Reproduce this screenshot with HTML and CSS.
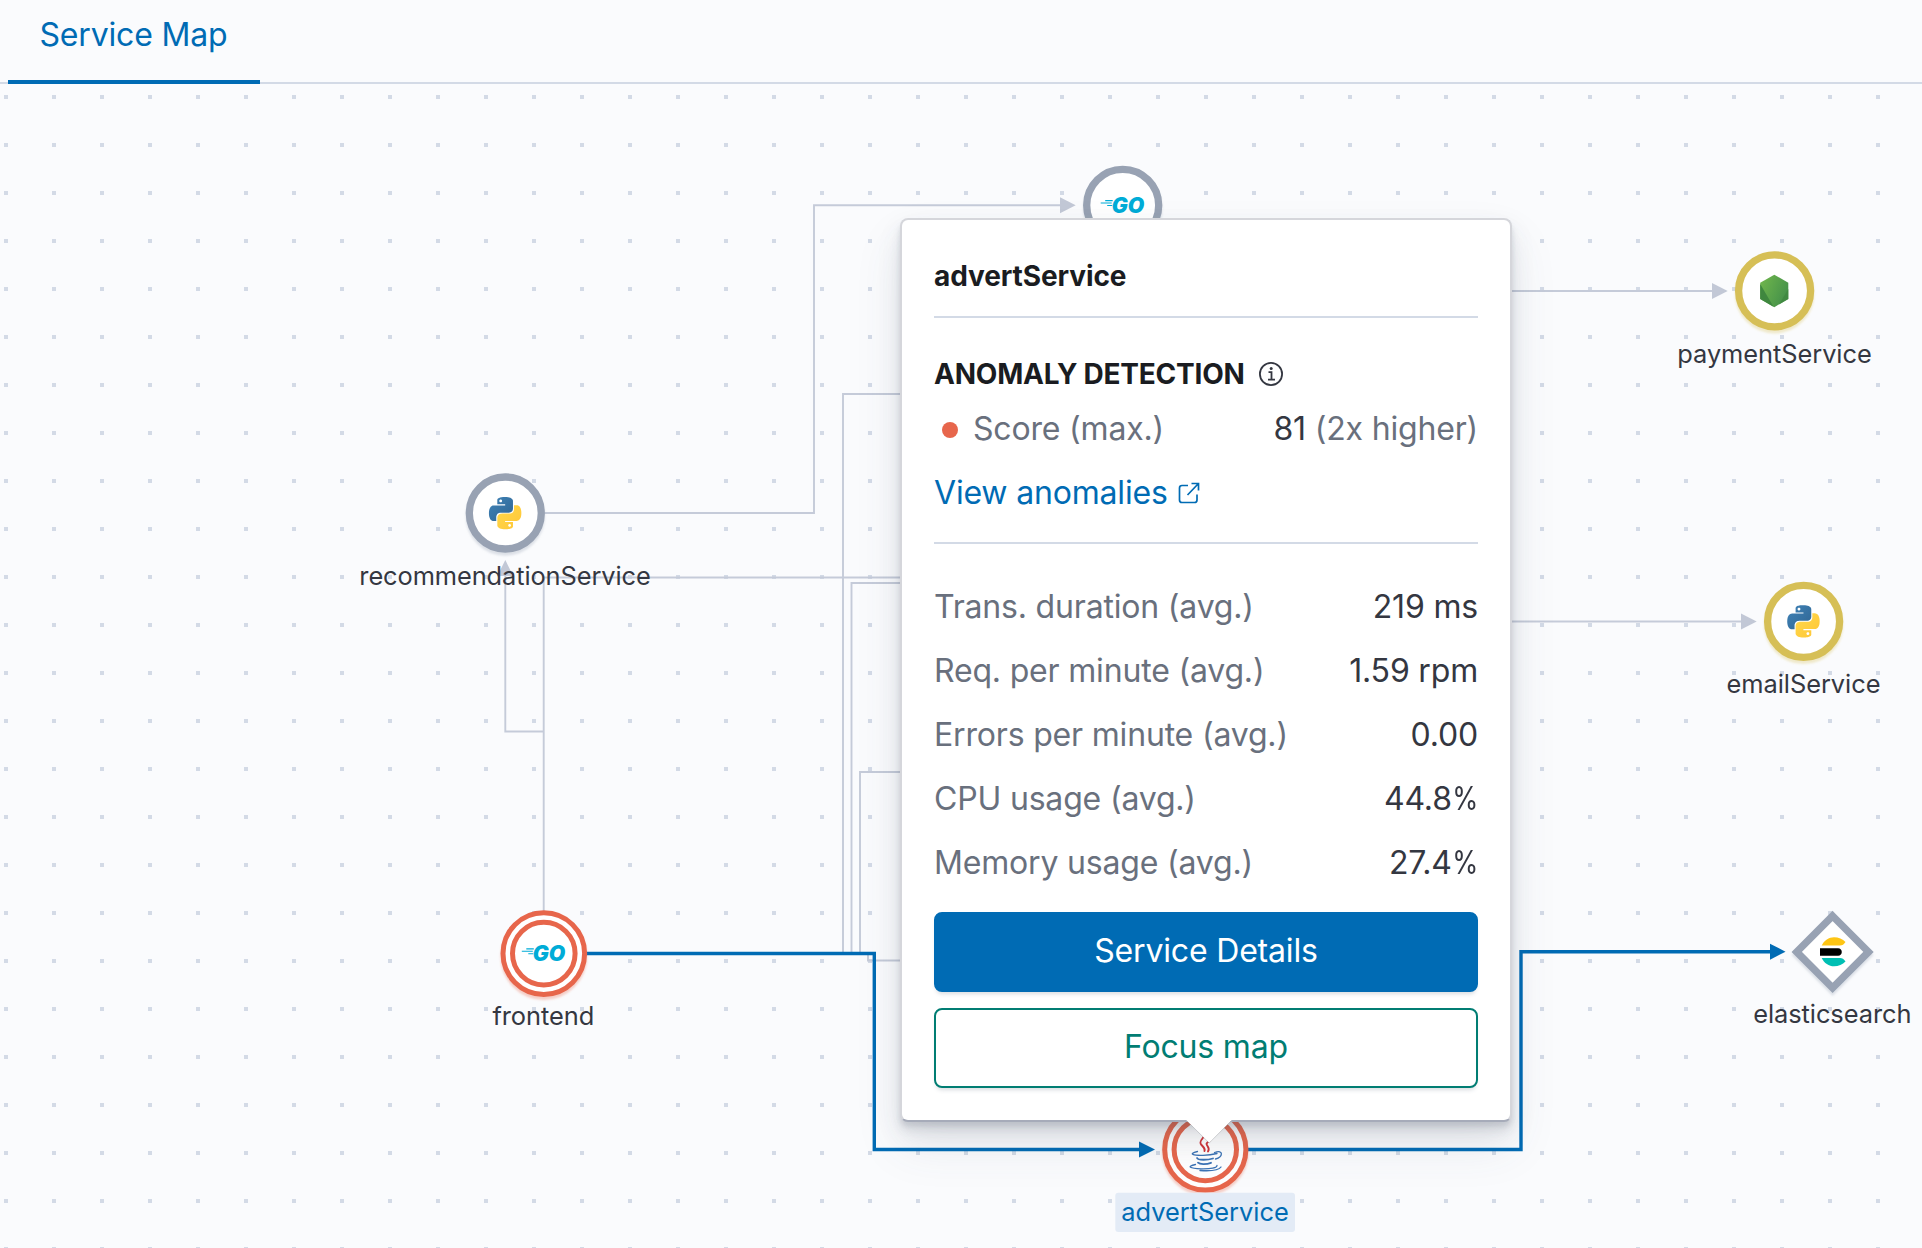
FILE: index.html
```html
<!DOCTYPE html>
<html lang="en">
<head>
<meta charset="utf-8">
<title>Service Map</title>
<link rel="stylesheet" href="styles.css">
</head>
<body>
<nav class="tabs">
  <a class="tab tab-selected">Service Map</a>
</nav>
<main class="map">
  <svg class="graph" width="1922" height="1164" viewBox="0 84 1922 1164">
    <defs>
      <linearGradient id="py-blue" x1="0" y1="0" x2="1" y2="1"><stop offset="0" stop-color="#3f83b8"/><stop offset="1" stop-color="#306592"/></linearGradient>
      <linearGradient id="py-yellow" x1="0" y1="0" x2="1" y2="1"><stop offset="0" stop-color="#ffd94c"/><stop offset="1" stop-color="#ffc636"/></linearGradient>
      <linearGradient id="node-mid" x1="0" y1="0" x2="1" y2="0.5"><stop offset="0" stop-color="#72b84c"/><stop offset="1" stop-color="#46924a"/></linearGradient>
      <filter id="node-shadow" x="-20%" y="-20%" width="140%" height="150%"><feDropShadow dx="0" dy="3" stdDeviation="1.2" flood-color="#98a2b3" flood-opacity=".3"/></filter>
      <filter id="red-shadow" x="-20%" y="-20%" width="140%" height="150%"><feDropShadow dx="0" dy="3" stdDeviation="1.2" flood-color="#e7664c" flood-opacity=".3"/></filter>
      <filter id="gold-shadow" x="-20%" y="-20%" width="140%" height="150%"><feDropShadow dx="0" dy="3" stdDeviation="1.2" flood-color="#d6bf57" flood-opacity=".3"/></filter>
      <g id="python">
        <path fill="url(#py-blue)" d="M14.25.18l.9.2.73.26.59.3.45.32.34.34.25.34.16.33.1.3.04.26.02.2-.01.13V8.5l-.05.63-.13.55-.21.46-.26.38-.3.31-.33.25-.35.19-.35.14-.33.1-.3.07-.26.04-.21.02H8.77l-.69.05-.59.14-.5.22-.41.27-.33.32-.27.35-.2.36-.15.37-.1.35-.07.32-.04.27-.02.21v3.06H3.17l-.21-.03-.28-.07-.32-.12-.35-.18-.36-.26-.36-.36-.35-.46-.32-.59-.28-.73-.21-.88-.14-1.05-.05-1.23.06-1.22.16-1.04.24-.87.32-.71.36-.57.4-.44.42-.33.42-.24.4-.16.36-.1.32-.05.24-.01h.16l.06.01h8.16v-.83H6.18l-.01-2.75-.02-.37.05-.34.11-.31.17-.28.25-.26.31-.23.38-.2.44-.18.51-.15.58-.12.64-.1.71-.06.77-.04.84-.02 1.27.05zm-6.3 1.98l-.23.33-.08.41.08.41.23.34.33.22.41.09.41-.09.33-.22.23-.34.08-.41-.08-.41-.23-.33-.33-.22-.41-.09-.41.09z"/>
        <path fill="url(#py-yellow)" d="M21.04 6.11l.28.06.32.12.35.18.36.27.36.35.35.47.32.59.28.73.21.88.14 1.04.05 1.23-.06 1.23-.16 1.04-.24.86-.32.71-.36.57-.4.45-.42.33-.42.24-.4.16-.36.09-.32.05-.24.02-.16-.01h-8.22v.82h5.84l.01 2.76.02.36-.05.34-.11.31-.17.29-.25.25-.31.24-.38.2-.44.17-.51.15-.58.13-.64.09-.71.07-.77.04-.84.01-1.27-.04-1.07-.14-.9-.2-.73-.25-.59-.3-.45-.33-.34-.34-.25-.34-.16-.33-.1-.3-.04-.25-.02-.2.01-.13v-5.34l.05-.64.13-.54.21-.46.26-.38.3-.32.33-.24.35-.2.35-.14.33-.1.3-.06.26-.04.21-.02.13-.01h5.84l.69-.05.59-.14.5-.21.41-.28.33-.32.27-.35.2-.36.15-.36.1-.35.07-.32.04-.28.02-.21V6.07h2.09l.14.01zm-6.47 14.25l-.23.33-.08.41.08.41.23.33.33.23.41.08.41-.08.33-.23.23-.33.08-.41-.08-.41-.23-.33-.33-.23-.41-.08-.41.08z"/>
      </g>
      <g id="golang">
        <path d="M-17.5-4.7h7.500M-22-2.300h11M-15.500.200h5" stroke="#00acd7" stroke-width="1.100" fill="none"/>
        <text class="go-mark" x="-11" y="7.200" textLength="32.500" lengthAdjust="spacingAndGlyphs">GO</text>
      </g>
    </defs>

    <g class="edges">
      <path d="M545 513H814V205.300H1062"/>
      <path d="M543.700 912V577.500H900"/>
      <path d="M543.700 731.500H505.300V574"/>
      <path d="M843 953V394H920"/>
      <path d="M851.500 953V583H920"/>
      <path d="M860 953V772H920"/>
      <path d="M868 953V960.500H920"/>
      <path d="M1500 291H1714"/>
      <path d="M1500 621.500H1743"/>
    </g>
    <g class="arrows">
      <path d="M1060 197.300V213.300L1075.700 205.300Z"/>
      <path d="M497.300 576H513.300L505.300 560Z"/>
      <path d="M1712 283V299L1727.700 291Z"/>
      <path d="M1741 613.500V629.500L1756.700 621.500Z"/>
    </g>
    <g class="edges edges-active">
      <path d="M586 953.500H874.300V1149.500H1141"/>
      <path d="M1247 1149.500H1521V951.700H1772"/>
    </g>
    <g class="arrows arrows-active">
      <path d="M1139 1141.500V1157.500L1155 1149.500Z"/>
      <path d="M1770 943.700V959.700L1785.500 951.700Z"/>
    </g>

    <g filter="url(#node-shadow)">
      <circle class="ring" cx="1122.700" cy="205.300" r="36"/>
    </g>
    <use href="#golang" x="1122.700" y="205.300"/>

    <circle class="ring" filter="url(#node-shadow)" cx="505.300" cy="513" r="36"/>
    <use href="#python" transform="translate(489 497) scale(1.345)"/>
    <text class="label label-long" x="505" y="584.500">recommendationService</text>

    <g filter="url(#red-shadow)">
      <circle class="ring-red" cx="543.800" cy="953.600" r="40.800"/>
      <circle class="ring-red" cx="543.800" cy="953.600" r="31.300"/>
    </g>
    <use href="#golang" x="543.800" y="953.600"/>
    <text class="label" x="543.300" y="1025">frontend</text>

    <circle class="ring ring-gold" filter="url(#gold-shadow)" cx="1774.600" cy="290.800" r="36"/>
    <path fill="url(#node-mid)" d="M1774.300 274.700L1788.300 282.700V299L1774.300 307.200L1760.200 299V282.700Z"/>
    <path fill="#3f873f" d="M1760.200 284L1773.500 306.700L1760.200 299Z"/>
    <path fill="#3f873f" d="M1788.300 289L1779 304.500L1788.300 299Z" opacity=".8"/>
    <text class="label" x="1774.500" y="362.500">paymentService</text>

    <circle class="ring ring-gold" filter="url(#gold-shadow)" cx="1803.600" cy="621.400" r="36"/>
    <use href="#python" transform="translate(1787.300 605.200) scale(1.345)"/>
    <text class="label" x="1803.500" y="692.500">emailService</text>

    <path class="ring" filter="url(#node-shadow)" d="M1832.600 916L1868.500 951.900L1832.600 987.800L1796.700 951.900Z"/>
    <path fill="#fec514" d="M1821.700 945.500C1824 940.300 1829 937.200 1834 937.200C1838.500 937.200 1842.600 939 1845.500 942C1844 944.500 1842.200 945.500 1840 945.500Z"/>
    <path fill="#000" d="M1820 948.200H1838C1843 948.200 1843 955.700 1838 955.700H1820Z"/>
    <path fill="#00bfb3" d="M1821.700 958H1840C1842.200 958 1844 959 1845.500 961.500C1842.600 964.500 1838.500 966.300 1834 966.300C1829 966.300 1824 963.200 1821.700 958Z"/>
    <text class="label" x="1832.300" y="1023">elasticsearch</text>

    <g filter="url(#red-shadow)">
      <circle class="ring-red" cx="1205.300" cy="1149.500" r="40.600"/>
      <circle class="ring-red" cx="1205.300" cy="1149.500" r="31.200"/>
    </g>
    <g fill="none" stroke-linecap="round">
      <path stroke="#d13438" stroke-width="1.900" d="M1204 1132C1207 1138 1197 1140 1201.500 1145C1203.500 1147.300 1205.500 1148.500 1204.500 1151M1209.500 1141C1202 1145 1211.500 1146 1208 1151.500"/>
      <path stroke="#3b73b5" stroke-width="1.300" d="M1197.500 1151.500C1187 1154 1194 1155.500 1203 1155.300C1208 1155.200 1213 1154.500 1217 1153.500M1214.500 1152.500C1224 1149 1223 1157 1215.500 1159"/>
      <path stroke="#3b73b5" stroke-width="1.800" d="M1197 1158C1198 1160.500 1208 1160 1213 1158.500M1198 1162.700C1200 1164.800 1207 1164.300 1211 1162.800"/>
      <path stroke="#3b73b5" stroke-width="1.300" d="M1195.500 1164.500C1186 1166.500 1190 1168.500 1201 1168.800C1211 1169 1217 1168 1217 1165.500M1200 1170.500C1210 1171.200 1219 1170 1221 1167"/>
    </g>
    <rect x="1115.300" y="1192.700" width="179.700" height="39.300" rx="3" fill="#e3ebf6"/>
    <text class="label label-active" x="1205" y="1220.500">advertService</text>
  </svg>

  <section class="popover">
    <h3 class="title">advertService</h3>
    <div class="anomaly">
      <h4 class="heading">ANOMALY DETECTION
        <svg class="info" viewBox="0 0 24 24"><circle cx="12" cy="12" r="11.100"/><path d="M9.500 10.200H12.500V17.500M9 17.600H16"/><circle class="info-dot" cx="12.200" cy="6.600" r="1.500"/></svg>
      </h4>
      <div class="score"><span class="dot"></span><span class="name">Score (max.)</span><span class="value">81 <span class="name">(2x higher)</span></span></div>
      <a class="link">View anomalies
        <svg class="external" viewBox="0 0 22 22"><path d="M10 3.500H4Q1.500 3.500 1.500 6V18Q1.500 20.500 4 20.500H16.500Q19 20.500 19 18V12.500M9.500 13L20 2M13.500 1.500H20.500V8.500"/></svg>
      </a>
    </div>
    <dl class="stats">
      <div class="row"><dt>Trans. duration (avg.)</dt><dd>219 ms</dd></div>
      <div class="row"><dt>Req. per minute (avg.)</dt><dd>1.59 rpm</dd></div>
      <div class="row"><dt>Errors per minute (avg.)</dt><dd>0.00</dd></div>
      <div class="row"><dt>CPU usage (avg.)</dt><dd>44.8<span class="percent">%</span></dd></div>
      <div class="row"><dt>Memory usage (avg.)</dt><dd>27.4<span class="percent">%</span></dd></div>
    </dl>
    <div class="actions">
      <button class="button button-fill">Service Details</button>
      <button class="button">Focus map</button>
    </div>
    <svg class="arrow" width="46" height="24" viewBox="0 0 46 24"><path fill="#fff" d="M0 0H46L23.200 23Z"/><path fill="none" stroke="#343741" stroke-opacity=".2" d="M0.500 0.500L23.200 23L45.500 0.500"/></svg>
  </section>
</main>
</body>
</html>
```

FILE: styles.css
```css
* { box-sizing: border-box; }

body {
  margin: 0;
  height: 1248px;
  overflow: hidden;
  display: flex;
  flex-direction: column;
  background: #fafbfd;
  color: #343741;
  font-family: Inter, "Liberation Sans", sans-serif;
  font-size: 32px;
  letter-spacing: -.18px;
}

.tabs {
  display: flex;
  height: 84px;
  flex: none;
  padding: 0 8px;
  box-shadow: inset 0 -2px #d3dae6;
}

.tab {
  width: 252px;
  padding-left: 31.5px;
  line-height: 70px;
  color: #006bb4;
  white-space: nowrap;
  border-bottom: 4px solid #006bb4;
}

.map {
  position: relative;
  flex: 1;
  background: conic-gradient(from 90deg at 44px 44px, #d3dae6 90deg, transparent 0) -40px -33px / 48px 48px;
}

.graph { display: block; }

.edges path { fill: none; stroke: #c5cbd9; stroke-width: 1.900; }
.edges-active path { stroke: #006bb4; stroke-width: 3.400; }
.arrows path { fill: #c2c8d6; }
.arrows-active path { fill: #006bb4; }

.ring { fill: #fff; stroke: #98a2b3; stroke-width: 7.300; }
.ring-gold { stroke: #d6bf57; }
.ring-red { fill: #fff; stroke: #e7664c; stroke-width: 5; }

.label { font-size: 25.4px; letter-spacing: -.05px; text-anchor: middle; fill: #343741; }
.label-long { letter-spacing: -.09px; }
.label-active { letter-spacing: 0; fill: #006bb4; }
.go-mark { font-size: 21px; font-weight: 900; font-style: italic; letter-spacing: 0; fill: #00acd7; }

.popover {
  position: absolute;
  left: 900px;
  top: 134px;
  width: 612px;
  height: 904px;
  padding: 32px;
  background: #fff;
  border: 2px solid #d5d6db;
  border-bottom-color: #a6abb9;
  border-radius: 8px;
  box-shadow: 0 24px 48px rgba(65, 78, 101, .1), 0 12px 24px rgba(65, 78, 101, .1), 0 8px 8px rgba(65, 78, 101, .1), 0 4px 4px rgba(65, 78, 101, .1);
}

.title, .heading { margin: 0; font-size: 28px; font-weight: 700; color: #1a1c21; }
.title { height: 66px; line-height: 48px; letter-spacing: -.1px; border-bottom: 2px solid #d3dae6; }

.anomaly { height: 226px; padding-top: 32px; border-bottom: 2px solid #d3dae6; }
.heading { display: flex; align-items: center; gap: 14px; height: 48px; letter-spacing: -.22px; }
.info { width: 24px; height: 24px; fill: none; stroke: #343741; stroke-width: 1.800; }
.info-dot { fill: #343741; stroke: none; }

.score { display: flex; align-items: center; height: 64px; padding-left: 8px; line-height: 40px; }
.score .name, .score .value { padding-bottom: 3px; }
.score .value .name { padding: 0; }
.dot { width: 16px; height: 16px; margin-right: 15px; border-radius: 50%; background: #e7664c; }
.name { color: #69707d; }
.value { margin-left: auto; }
.link { display: flex; align-items: center; gap: 10px; height: 61px; color: #006bb4; }
.external { width: 22px; height: 22px; fill: none; stroke: #006bb4; stroke-width: 1.700; }

.stats { margin: 31px 0 0; }
.row { display: flex; justify-content: space-between; line-height: 64px; }
.row dt { color: #69707d; }
.row dd { margin: 0; }
.percent { display: inline-block; margin-left: -5px; transform: scaleX(.83); transform-origin: right; }

.actions { display: flex; flex-direction: column; gap: 16px; margin-top: 17px; }
.button {
  height: 80px;
  padding: 0 0 4px;
  font: inherit;
  letter-spacing: inherit;
  color: #017d73;
  background: #fff;
  border: 2px solid #017d73;
  border-radius: 8px;
  box-shadow: 0 4px 4px -2px rgba(65, 78, 101, .2);
}
.button-fill { color: #fff; background: #006bb4; border-color: #006bb4; }

.arrow { position: absolute; left: 284px; top: 900px; }
```
